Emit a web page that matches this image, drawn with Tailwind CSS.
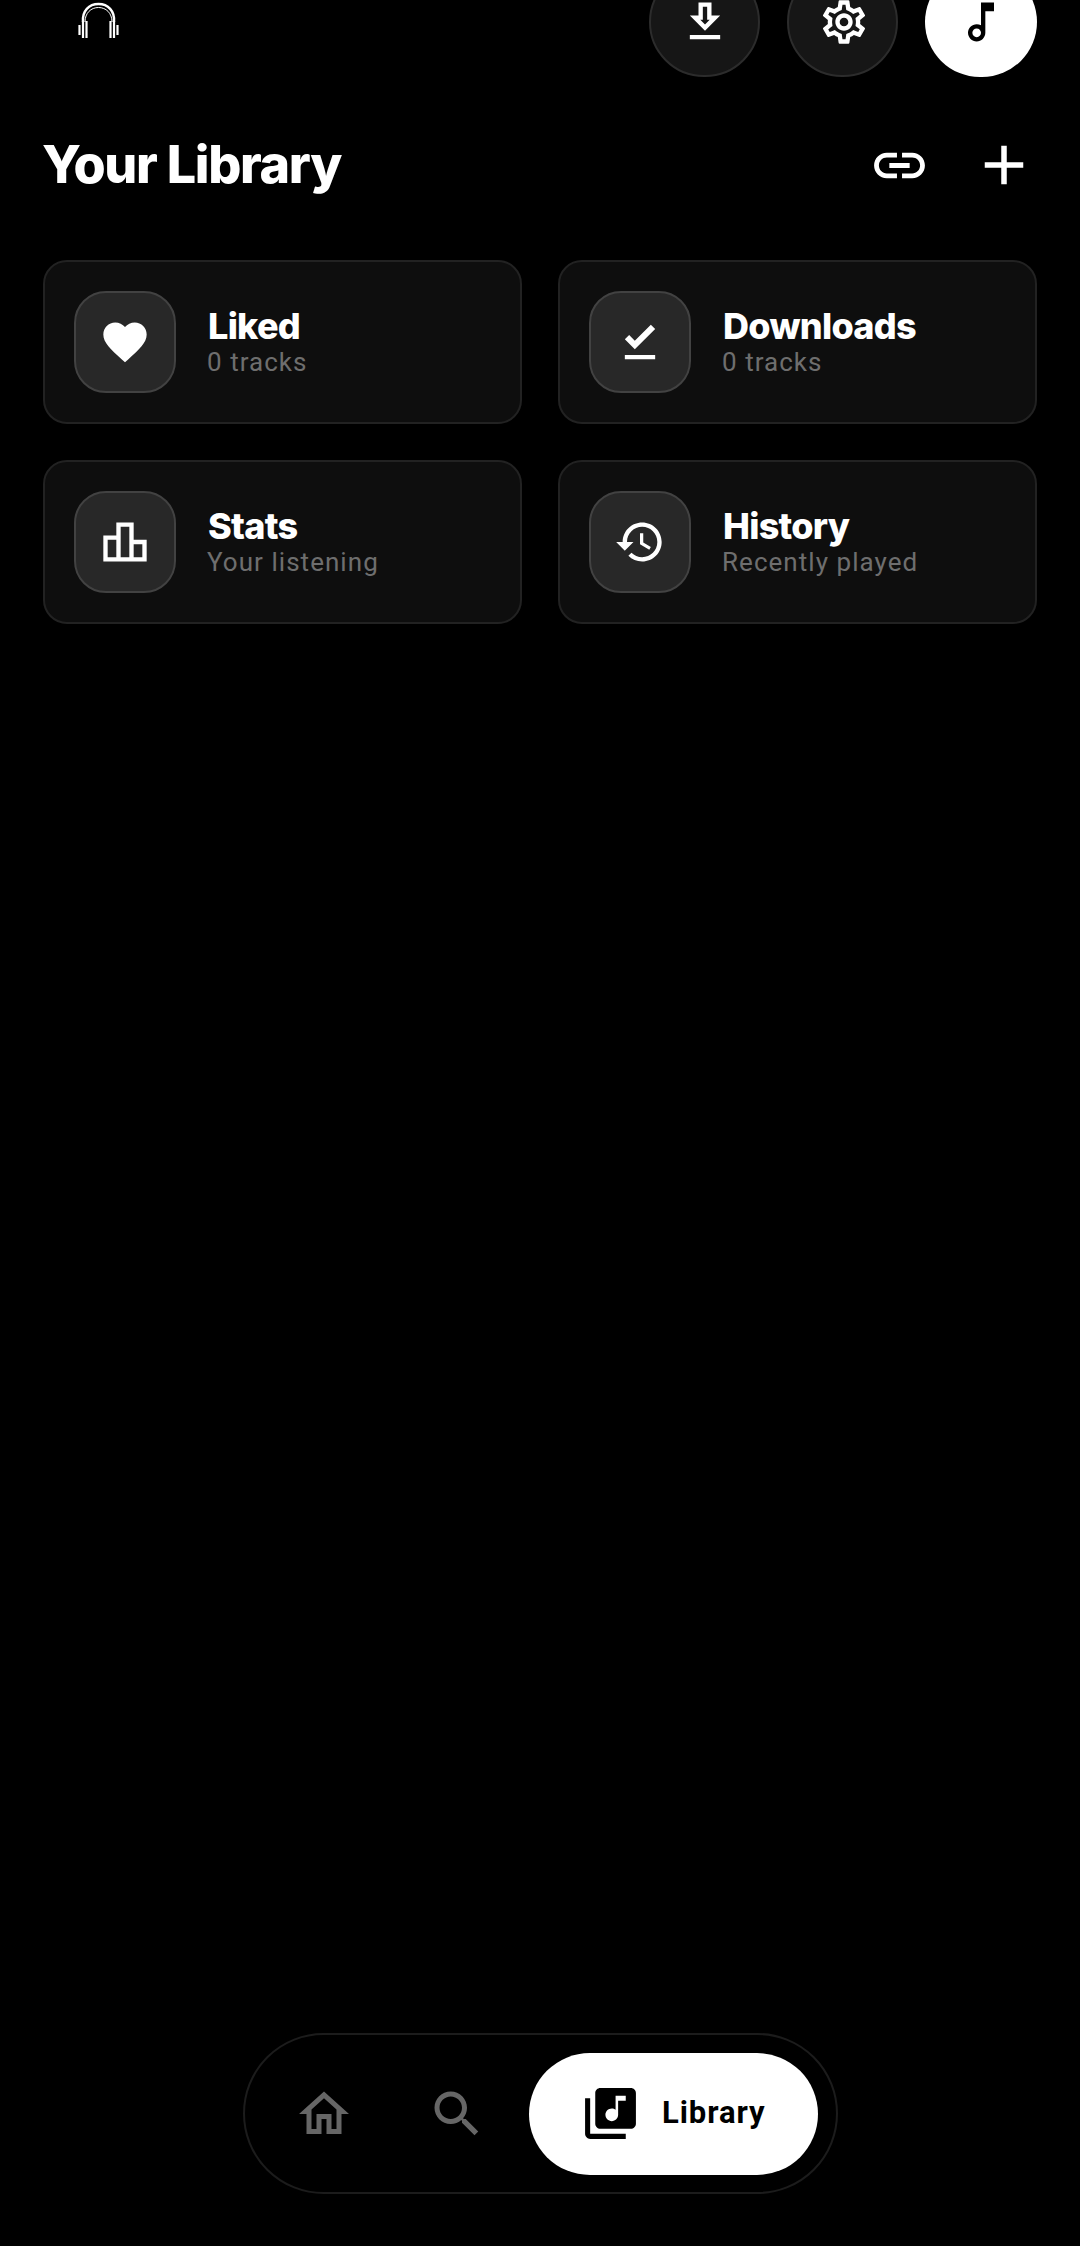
<!DOCTYPE html>
<html>
<head>
<meta charset="utf-8">
<script src="https://cdn.jsdelivr.net/npm/@tailwindcss/browser@4"></script>
</head>
<body class="bg-black">
<div class="relative w-[1080px] h-[2246px] overflow-hidden bg-black font-['Inter',sans-serif] text-white">
  <header class="flex items-start justify-between pl-[77px] pr-[43px] -mt-[33px]">
    <svg class="mt-[35px] w-[43px] h-[37px]" viewBox="0 0 43 37" fill="none" stroke="white">
      <path d="M6 20C5 9 12 2 21.500 2S38 9 37 20" stroke-width="2.400"/>
      <path d="M8 20C8 11 14 5.500 21.500 5.500S35 11 35 20" stroke-width="1"/>
      <path d="M2.500 23v10M6 19v17M9.500 19v17M33.500 19v17M37 19v17M40.500 23v10" stroke-width="2.200"/>
    </svg>
    <div class="flex gap-[27px]">
      <button class="flex items-center justify-center w-[111px] h-[110px] rounded-full bg-[#161616] border-2 border-[#2c2c2c]">
        <svg class="w-[52px] h-[52px] fill-white" viewBox="0 0 24 24"><path d="M19 9h-4V3H9v6H5l7 7 7-7zm-8 2V5h2v6h1.170L12 13.170 9.830 11H11zm-6 7h14v2H5z"/></svg>
      </button>
      <button class="flex items-center justify-center w-[111px] h-[110px] rounded-full bg-[#161616] border-2 border-[#2c2c2c]">
        <svg class="ml-[2px] w-[52px] h-[52px] fill-white" viewBox="0 0 24 24"><path d="M19.430 12.980c.040-.320.070-.640.070-.980 0-.340-.030-.660-.070-.980l2.110-1.650c.190-.150.240-.420.120-.640l-2-3.460c-.090-.160-.260-.250-.440-.250-.060 0-.120.010-.170.030l-2.490 1c-.520-.400-1.080-.730-1.690-.980l-.380-2.650C14.460 2.180 14.250 2 14 2h-4c-.250 0-.460.180-.490.420l-.380 2.650c-.610.250-1.170.590-1.690.980l-2.490-1c-.060-.020-.120-.030-.180-.030-.170 0-.340.090-.430.250l-2 3.460c-.130.220-.070.490.120.640l2.110 1.650c-.040.320-.070.650-.070.980 0 .330.030.660.070.980l-2.110 1.650c-.190.150-.240.420-.120.640l2 3.460c.090.160.260.250.440.250.060 0 .120-.010.170-.030l2.490-1c.520.400 1.080.730 1.690.980l.380 2.650c.030.240.240.420.490.420h4c.250 0 .460-.180.490-.420l.380-2.650c.610-.250 1.170-.590 1.690-.980l2.490 1c.060.020.120.030.180.030.170 0 .340-.090.430-.250l2-3.460c.120-.220.070-.490-.120-.640l-2.110-1.650zm-1.980-1.710c.040.310.050.520.050.730 0 .210-.020.430-.050.730l-.140 1.130.890.700 1.080.840-.700 1.210-1.270-.510-1.040-.420-.900.680c-.430.320-.840.560-1.250.730l-1.060.430-.160 1.130-.200 1.350h-1.400l-.190-1.350-.160-1.130-1.060-.430c-.430-.180-.830-.410-1.230-.710l-.910-.700-1.060.430-1.270.510-.700-1.210 1.080-.840.890-.700-.140-1.130c-.030-.310-.050-.540-.050-.740s.020-.430.050-.730l.140-1.130-.890-.700-1.080-.840.700-1.210 1.270.510 1.040.420.900-.680c.430-.320.840-.560 1.250-.730l1.060-.43.160-1.130.200-1.350h1.390l.190 1.350.160 1.130 1.060.43c.430.180.830.410 1.230.710l.910.700 1.060-.43 1.270-.510.700 1.210-1.070.85-.89.700.140 1.130zM12 8c-2.210 0-4 1.790-4 4s1.790 4 4 4 4-1.790 4-4-1.790-4-4-4zm0 6c-1.100 0-2-.900-2-2s.900-2 2-2 2 .900 2 2-.900 2-2 2z"/></svg>
      </button>
      <button class="flex items-center justify-center w-[112px] h-[110px] rounded-full bg-white">
        <svg class="w-[52px] h-[52px] fill-black" viewBox="0 0 24 24"><path d="M12 3l.010 10.550c-.590-.340-1.270-.550-2-.550C7.790 13 6 14.790 6 17s1.790 4 4 4 4-1.790 4-4V7h4V3h-6zm-1.990 16c-1.100 0-2-.900-2-2s.900-2 2-2 2 .900 2 2-.900 2-2 2z"/></svg>
      </button>
    </div>
  </header>

  <div class="flex items-center justify-between pl-[42px] pr-[43px] mt-[55px] h-[66px]">
    <h1 class="text-[52px] font-extrabold tracking-[-0.025em] leading-none">Your Library</h1>
    <div class="flex items-center gap-[41px]">
      <svg class="w-[61px] h-[61px] fill-white" viewBox="0 0 24 24"><path d="M3.900 12c0-1.710 1.390-3.100 3.100-3.100h4V7H7c-2.760 0-5 2.240-5 5s2.240 5 5 5h4v-1.900H7c-1.710 0-3.100-1.390-3.100-3.100zM8 13h8v-2H8v2zm9-6h-4v1.900h4c1.710 0 3.100 1.390 3.100 3.100s-1.390 3.100-3.100 3.100h-4V17h4c2.760 0 5-2.240 5-5s-2.240-5-5-5z"/></svg>
      <svg class="w-[66px] h-[66px] fill-white" viewBox="0 0 24 24"><path d="M19 13h-6v6h-2v-6H5v-2h6V5h2v6h6v2z"/></svg>
    </div>
  </div>

  <section class="grid grid-cols-2 gap-x-[36px] gap-y-[36px] px-[43px] mt-[62px]">
    <div class="flex items-center gap-[32px] h-[164px] pl-[29px] rounded-[24px] bg-[#0e0e0e] border-2 border-[#222222]">
      <div class="flex items-center justify-center w-[102px] h-[102px] rounded-[32px] bg-[#282828] border-2 border-[#424242]">
        <svg class="w-[52px] h-[52px] fill-white" viewBox="0 0 24 24"><path d="M12 21.350l-1.450-1.320C5.400 15.360 2 12.280 2 8.500 2 5.420 4.420 3 7.500 3c1.740 0 3.410.810 4.500 2.090C13.090 3.810 14.760 3 16.500 3 19.580 3 22 5.420 22 8.500c0 3.780-3.400 6.860-8.550 11.540L12 21.350z"/></svg>
      </div>
      <div class="flex flex-col">
        <div class="text-[36px] leading-[40px] font-extrabold tracking-[-0.02em]">Liked</div>
        <div class="-ml-px text-[26px] leading-[32px] tracking-[0.04em] text-[#6e6e6e] font-['Roboto',sans-serif]">0 tracks</div>
      </div>
    </div>
    <div class="flex items-center gap-[32px] h-[164px] pl-[29px] rounded-[24px] bg-[#0e0e0e] border-2 border-[#222222]">
      <div class="flex items-center justify-center w-[102px] h-[102px] rounded-[32px] bg-[#282828] border-2 border-[#424242]">
        <svg class="w-[52px] h-[52px] fill-white" viewBox="0 0 24 24"><path d="M5 18h14v2H5v-2zm4.600-2.700L5 10.700l2-1.900 2.600 2.600L17 4l2 2-9.400 9.300z"/></svg>
      </div>
      <div class="flex flex-col">
        <div class="text-[36px] leading-[40px] font-extrabold tracking-[-0.02em]">Downloads</div>
        <div class="-ml-px text-[26px] leading-[32px] tracking-[0.04em] text-[#6e6e6e] font-['Roboto',sans-serif]">0 tracks</div>
      </div>
    </div>
    <div class="flex items-center gap-[32px] h-[164px] pl-[29px] rounded-[24px] bg-[#0e0e0e] border-2 border-[#222222]">
      <div class="flex items-center justify-center w-[102px] h-[102px] rounded-[32px] bg-[#282828] border-2 border-[#424242]">
        <svg class="w-[52px] h-[52px] fill-white" viewBox="0 0 24 24"><path d="M16 11V3H8v6H2v12h20V11h-6zm-6-6h4v14h-4V5zm-6 6h4v8H4v-8zm16 8h-4v-6h4v6z"/></svg>
      </div>
      <div class="flex flex-col">
        <div class="text-[36px] leading-[40px] font-extrabold tracking-[-0.02em]">Stats</div>
        <div class="-ml-px text-[26px] leading-[32px] tracking-[0.04em] text-[#6e6e6e] font-['Roboto',sans-serif]">Your listening</div>
      </div>
    </div>
    <div class="flex items-center gap-[32px] h-[164px] pl-[29px] rounded-[24px] bg-[#0e0e0e] border-2 border-[#222222]">
      <div class="flex items-center justify-center w-[102px] h-[102px] rounded-[32px] bg-[#282828] border-2 border-[#424242]">
        <svg class="w-[52px] h-[52px] fill-white" viewBox="0 0 24 24"><path d="M13 3c-4.970 0-9 4.030-9 9H1l3.890 3.890.070.140L9 12H6c0-3.870 3.130-7 7-7s7 3.130 7 7-3.130 7-7 7c-1.930 0-3.680-.790-4.940-2.060l-1.420 1.420C8.270 19.990 10.510 21 13 21c4.970 0 9-4.030 9-9s-4.030-9-9-9zm-1 5v5l4.280 2.540.720-1.210-3.500-2.080V8H12z"/></svg>
      </div>
      <div class="flex flex-col">
        <div class="text-[36px] leading-[40px] font-extrabold tracking-[-0.02em]">History</div>
        <div class="-ml-px text-[26px] leading-[32px] tracking-[0.04em] text-[#6e6e6e] font-['Roboto',sans-serif]">Recently played</div>
      </div>
    </div>
  </section>

  <nav class="absolute left-[243px] top-[2033px] flex items-center w-[595px] h-[161px] pl-[49px] rounded-full border-2 border-[#1c1c1c]">
    <svg class="w-[60px] h-[60px] fill-[#666666]" viewBox="0 0 24 24"><path d="M12 5.690l5 4.500V18h-2v-6H9v6H7v-7.810l5-4.500M12 3L2 12h3v8h6v-6h2v6h6v-8h3L12 3z"/></svg>
    <svg class="w-[60px] h-[60px] ml-[73px] fill-[#666666]" viewBox="0 0 24 24"><path d="M15.500 14h-.790l-.280-.270C15.410 12.590 16 11.110 16 9.500 16 5.910 13.090 3 9.500 3S3 5.910 3 9.500 5.910 16 9.500 16c1.610 0 3.090-.590 4.230-1.570l.270.280v.790l5 4.990L20.490 19l-4.990-5zm-6 0C7.010 14 5 11.990 5 9.500S7.010 5 9.500 5 14 7.010 14 9.500 11.990 14 9.500 14z"/></svg>
    <div class="flex items-center gap-[21px] ml-[42px] pl-[51px] w-[289px] h-[122px] rounded-full bg-white text-black">
      <svg class="w-[61px] h-[61px] fill-black" viewBox="0 0 24 24"><path d="M20 2H8c-1.100 0-2 .900-2 2v12c0 1.100.900 2 2 2h12c1.100 0 2-.900 2-2V4c0-1.100-.900-2-2-2zm-2 5h-3v5.500c0 1.380-1.120 2.500-2.500 2.500S10 13.880 10 12.500s1.120-2.500 2.500-2.500c.570 0 1.080.190 1.500.510V5h4v2zM4 6H2v14c0 1.100.900 2 2 2h14v-2H4V6z"/></svg>
      <span class="text-[31px] font-bold tracking-[0.03em] font-['Roboto',sans-serif]">Library</span>
    </div>
  </nav>
</div>
</body>
</html>
